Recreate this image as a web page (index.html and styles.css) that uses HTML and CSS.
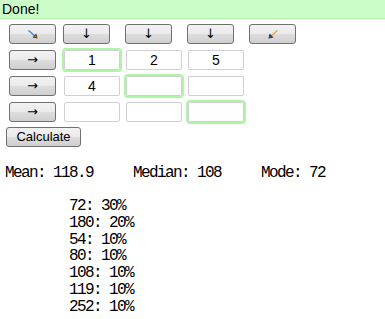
FILE: index.html
```html
<!DOCTYPE html>
<html>
<head>
<meta charset="utf-8">
<link rel="stylesheet" href="styles.css">
</head>
<body>
<div class="status">Done!</div>
<div class="grid">
  <button class="btn"><svg class="diag" width="10" height="9" viewBox="0 0 10 9"><line x1="0.5" y1="0.5" x2="7" y2="6" stroke="#3c86d6" stroke-width="1.4"/><path d="M9.5 8.5 L4.5 7.6 L8.4 3.6 Z" fill="#3a2a10"/><path d="M8.6 7.6 L6 7.2 L8 5 Z" fill="#e08a20"/></svg></button>
  <button class="btn">↓</button>
  <button class="btn">↓</button>
  <button class="btn">↓</button>
  <button class="btn"><svg class="diag" width="10" height="9" viewBox="0 0 10 9"><line x1="9.5" y1="0.5" x2="3" y2="6" stroke="#e8a040" stroke-width="1.4"/><path d="M0.5 8.5 L5.5 7.6 L1.6 3.6 Z" fill="#202838"/><path d="M1.4 7.6 L4 7.2 L2 5 Z" fill="#3c6ab0"/></svg></button>

  <button class="btn">→</button>
  <input class="cell hl" value="1">
  <input class="cell" value="2">
  <input class="cell" value="5">
  <span></span>

  <button class="btn">→</button>
  <input class="cell" value="4">
  <input class="cell hl" value="">
  <input class="cell" value="">
  <span></span>

  <button class="btn">→</button>
  <input class="cell" value="">
  <input class="cell" value="">
  <input class="cell hl" value="">
  <span></span>
</div>
<button class="btn calc">Calculate</button>
<pre class="stats">Mean: 118.9	Median: 108	Mode: 72</pre>
<pre class="dist">	72: 30%
	180: 20%
	54: 10%
	80: 10%
	108: 10%
	119: 10%
	252: 10%</pre>
</body>
</html>
```
FILE: styles.css
```css
html, body {
  margin: 0;
  padding: 0;
  background: #ffffff;
}
body {
  font-family: "Liberation Sans", Arial, sans-serif;
  color: #000;
}
.status {
  height: 18px;
  line-height: 18px;
  background: #ccfcc8;
  border-bottom: 1px solid #b0f4a8;
  padding-left: 2px;
  font-size: 14px;
}
.grid {
  display: grid;
  grid-template-columns: 54px 62px 62px 62px 62px;
  grid-auto-rows: 20px;
  row-gap: 6px;
  margin: 5px 0 0 9px;
  align-items: center;
}
.btn {
  box-sizing: border-box;
  width: 47px;
  height: 20px;
  margin: 0;
  padding: 0;
  border: 1px solid #707070;
  border-radius: 3px;
  background: linear-gradient(#f2f2f2 0%, #ebebeb 48%, #dddddd 52%, #cfcfcf 100%);
  font-family: "DejaVu Sans", sans-serif;
  font-size: 13px;
  line-height: 18px;
  color: #000;
  display: flex;
  align-items: center;
  justify-content: center;
}
.diag {
  display: block;
}
.cell {
  box-sizing: border-box;
  width: 56px;
  height: 20px;
  margin: 0 0 0 1px;
  padding: 0;
  border: 1px solid #cfcfd4;
  border-radius: 2px;
  text-align: center;
  font-family: "Liberation Sans", Arial, sans-serif;
  font-size: 14px;
  color: #000;
  background: #fff;
}
.hl {
  outline: 2px solid #b0f4a8;
}
.calc {
  width: 75px;
  margin: 5px 0 0 6px;
  font-family: "Liberation Sans", Arial, sans-serif;
  font-size: 13px;
}
.stats, .dist {
  font-family: "Liberation Mono", monospace;
  font-size: 16px;
  letter-spacing: -1.6px;
  tab-size: 64px;
  -moz-tab-size: 64px;
  margin: 0;
  padding-left: 5px;
}
.stats {
  margin-top: 18px;
  line-height: 16px;
}
.dist {
  margin-top: 17px;
  line-height: 16.8px;
}
```
